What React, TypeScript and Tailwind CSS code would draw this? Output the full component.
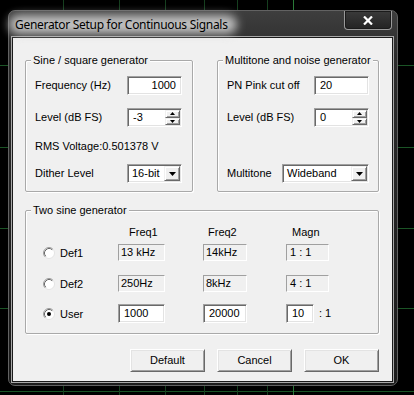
import React from "react";

const SUNKEN =
  "border border-t-[#a0a0a0] border-l-[#a0a0a0] border-r-white border-b-white shadow-[inset_1px_1px_0_#696969,inset_-1px_-1px_0_#e3e3e3]";
const STATIC =
  "border border-t-[#a0a0a0] border-l-[#a0a0a0] border-r-white border-b-white bg-[#f0f0f0]";
const RAISED =
  "border border-t-[#f0f0f0] border-l-[#f0f0f0] border-r-[#696969] border-b-[#696969] shadow-[inset_1px_1px_0_#fff,inset_-1px_-1px_0_#a0a0a0] bg-[#f0f0f0]";
const BUTTON =
  "border border-t-white border-l-white border-r-[#696969] border-b-[#696969] shadow-[inset_1px_1px_0_#e3e3e3,inset_-1px_-1px_0_#a0a0a0] bg-[#f0f0f0]";
const GROUP =
  "relative border border-[#a9a9a9] rounded-[2px] shadow-[inset_1px_1px_0_#fff,1px_1px_0_#fff]";

function DownArrow() {
  return (
    <svg width="7" height="4" viewBox="0 0 7 4">
      <path d="M0 0h7L3.5 4z" fill="#000" />
    </svg>
  );
}

function SmallUp() {
  return (
    <svg width="5" height="3" viewBox="0 0 5 3">
      <path d="M0 3h5L2.5 0z" fill="#000" />
    </svg>
  );
}

function SmallDown() {
  return (
    <svg width="5" height="3" viewBox="0 0 5 3">
      <path d="M0 0h5L2.5 3z" fill="#000" />
    </svg>
  );
}

function Radio({ checked }: { checked?: boolean }) {
  return (
    <svg width="12" height="12" viewBox="0 0 12 12">
      <circle cx="6" cy="6" r="5.5" fill="#fff" stroke="#e3e3e3" />
      <path d="M2.11 9.89A5.5 5.5 0 0 1 9.89 2.11" fill="none" stroke="#a0a0a0" />
      <path d="M2.82 9.18A4.5 4.5 0 0 1 9.18 2.82" fill="none" stroke="#696969" />
      {checked && <circle cx="6" cy="6" r="2" fill="#000" />}
    </svg>
  );
}

function Spin({ value, className }: { value: string; className: string }) {
  return (
    <div className={`${SUNKEN} bg-white flex h-[19px] ${className}`}>
      <span className="flex-1 pl-[5px] leading-[17px]">{value}</span>
      <div className="flex flex-col w-[15px] m-[1px]">
        <div className={`${RAISED} flex-1 flex items-center justify-center`}>
          <SmallUp />
        </div>
        <div className={`${RAISED} flex-1 flex items-center justify-center`}>
          <SmallDown />
        </div>
      </div>
    </div>
  );
}

function Combo({ value, className }: { value: string; className: string }) {
  return (
    <div className={`${SUNKEN} bg-white flex h-[19px] ${className}`}>
      <span className="flex-1 pl-[4px] leading-[17px]">{value}</span>
      <div className={`${RAISED} w-[16px] m-[1px] flex items-center justify-center`}>
        <DownArrow />
      </div>
    </div>
  );
}

function Legend({ children }: { children: React.ReactNode }) {
  return (
    <span className="absolute left-[5px] top-[-8px] px-[2px] bg-[#f0f0f0] leading-[14px]">
      {children}
    </span>
  );
}

export default function App() {
  return (
    <div className="relative w-[414px] h-[395px] bg-black overflow-hidden font-['Liberation_Sans',Arial,sans-serif] text-[11px] text-black">
      <svg className="absolute inset-0" width="414" height="395">
        {[65, 147, 228, 308, 391].map((y) => (
          <line key={y} x1="0" x2="414" y1={y + 0.5} y2={y + 0.5} stroke="#1b5426" />
        ))}
        {[63, 119, 165, 204, 237, 267].map((x) => (
          <line key={x} x1={x + 0.5} x2={x + 0.5} y1="0" y2="395" stroke="#163f1f" />
        ))}
        <line x1="293.5" x2="293.5" y1="0" y2="395" stroke="#2a7a38" />
      </svg>

      {/* window */}
      <div className="absolute left-[8px] top-[10px] w-[390px] h-[376px] rounded-[7px] border border-[#626262] bg-[linear-gradient(180deg,#3e3e3e_0%,#2c2c2c_12%,#222_60%,#1c1c1c_100%)] flex flex-col">
        <div className="relative h-[27px] flex items-center pl-[6px]">
          <div className="absolute left-[0px] top-[4px] w-[228px] h-[19px] rounded-[10px] bg-[#cfcfcf] blur-[5px] opacity-90" />
          <span className="relative font-['Noto_Sans',sans-serif] text-[12px] tracking-[-0.3px] text-black leading-[16px]">
            Generator Setup for Continuous Signals
          </span>
          <div className="absolute right-[5px] top-0 w-[48px] h-[19px] rounded-b-[4px] border border-t-0 border-[#9a9a9a] shadow-[inset_0_0_0_1px_#1a1a1a] bg-[linear-gradient(180deg,#3a3a3a,#232323)] flex items-center justify-center">
            <svg width="10" height="9" viewBox="0 0 10 9">
              <path d="M1 0.5L9 8.5M9 0.5L1 8.5" stroke="#fff" strokeWidth="2.2" />
            </svg>
          </div>
        </div>

        {/* client */}
        <div className="ml-[4px] mr-[5px] mb-[4px] flex-1 bg-[#f0f0f0] shadow-[0_0_0_1px_#1a1a1a,0_0_0_2px_#a8a8a8] flex flex-col pt-[22px] pl-[12px] pr-[13px]">
          <div className="flex gap-[24px]">
            {/* group 1 */}
            <div className={`${GROUP} w-[168px] pt-[15px] pl-[9px] pr-[10px] pb-[8px]`}>
              <Legend>Sine / square generator</Legend>
              <div className="h-[19px] flex items-center justify-between">
                <span>Frequency (Hz)</span>
                <div className={`${SUNKEN} bg-white w-[55px] h-[19px] flex items-center justify-end pr-[5px]`}>
                  1000
                </div>
              </div>
              <div className="mt-[13px] h-[19px] flex items-center justify-between">
                <span>Level (dB FS)</span>
                <Spin value="-3" className="w-[55px]" />
              </div>
              <div className="mt-[10px] h-[18px] flex items-center">
                <span>RMS Voltage:0.501378 V</span>
              </div>
              <div className="mt-[9px] h-[19px] flex items-center justify-between">
                <span>Dither Level</span>
                <Combo value="16-bit" className="w-[55px]" />
              </div>
            </div>

            {/* group 2 */}
            <div className={`${GROUP} w-[162px] pt-[15px] pl-[9px] pr-[9px] pb-[8px]`}>
              <Legend>Multitone and noise generator</Legend>
              <div className="h-[19px] flex items-center justify-between">
                <span>PN Pink cut off</span>
                <div className={`${SUNKEN} bg-white w-[55px] h-[19px] flex items-center pl-[5px]`}>20</div>
              </div>
              <div className="mt-[13px] h-[19px] flex items-center justify-between">
                <span>Level (dB FS)</span>
                <Spin value="0" className="w-[55px]" />
              </div>
              <div className="mt-[10px] h-[18px]" />
              <div className="mt-[9px] h-[19px] flex items-center justify-between">
                <span>Multitone</span>
                <Combo value="Wideband" className="w-[87px]" />
              </div>
            </div>
          </div>

          {/* group 3 */}
          <div className={`${GROUP} mt-[18px] pt-[14px] pb-[10px]`}>
            <Legend>Two sine generator</Legend>
            <div className="h-[14px] flex items-center">
              <div className="w-[92px]" />
              <div className="w-[47px] pl-[11px]">Freq1</div>
              <div className="w-[38px]" />
              <div className="w-[44px] pl-[5px]">Freq2</div>
              <div className="w-[39px]" />
              <div className="w-[43px] pl-[6px]">Magn</div>
            </div>

            <div className="mt-[5px] h-[17px] flex items-center">
              <div className="w-[92px] pl-[17px] flex items-center gap-[5px]">
                <Radio />
                <span className="mt-[2px]">Def1</span>
              </div>
              <div className={`${STATIC} w-[47px] h-[17px] flex items-center pl-[2px]`}>13 kHz</div>
              <div className="w-[38px]" />
              <div className={`${STATIC} w-[44px] h-[17px] flex items-center pl-[2px]`}>14kHz</div>
              <div className="w-[39px]" />
              <div className={`${STATIC} w-[43px] h-[17px] flex items-center pl-[3px]`}>1 : 1</div>
            </div>

            <div className="mt-[14px] h-[17px] flex items-center">
              <div className="w-[92px] pl-[17px] flex items-center gap-[5px]">
                <Radio />
                <span className="mt-[2px]">Def2</span>
              </div>
              <div className={`${STATIC} w-[47px] h-[17px] flex items-center pl-[2px]`}>250Hz</div>
              <div className="w-[38px]" />
              <div className={`${STATIC} w-[44px] h-[17px] flex items-center pl-[2px]`}>8kHz</div>
              <div className="w-[39px]" />
              <div className={`${STATIC} w-[43px] h-[17px] flex items-center pl-[3px]`}>4 : 1</div>
            </div>

            <div className="mt-[12px] h-[19px] flex items-center">
              <div className="w-[92px] pl-[17px] flex items-center gap-[5px]">
                <Radio checked />
                <span className="mt-[1px]">User</span>
              </div>
              <div className={`${SUNKEN} bg-white w-[47px] h-[19px] flex items-center pl-[5px]`}>1000</div>
              <div className="w-[38px]" />
              <div className={`${SUNKEN} bg-white w-[44px] h-[19px] flex items-center pl-[5px]`}>20000</div>
              <div className="w-[39px]" />
              <div className={`${SUNKEN} bg-white w-[28px] h-[19px] flex items-center pl-[5px]`}>10</div>
              <span className="ml-[5px]">: 1</span>
            </div>
          </div>

          {/* buttons */}
          <div className="mt-[15px] flex justify-end gap-[12px]">
            <div className={`${BUTTON} w-[75px] h-[23px] flex items-center justify-center`}>Default</div>
            <div className={`${BUTTON} w-[75px] h-[23px] flex items-center justify-center`}>Cancel</div>
            <div className={`${BUTTON} w-[75px] h-[23px] flex items-center justify-center`}>OK</div>
          </div>
        </div>
      </div>
    </div>
  );
}
